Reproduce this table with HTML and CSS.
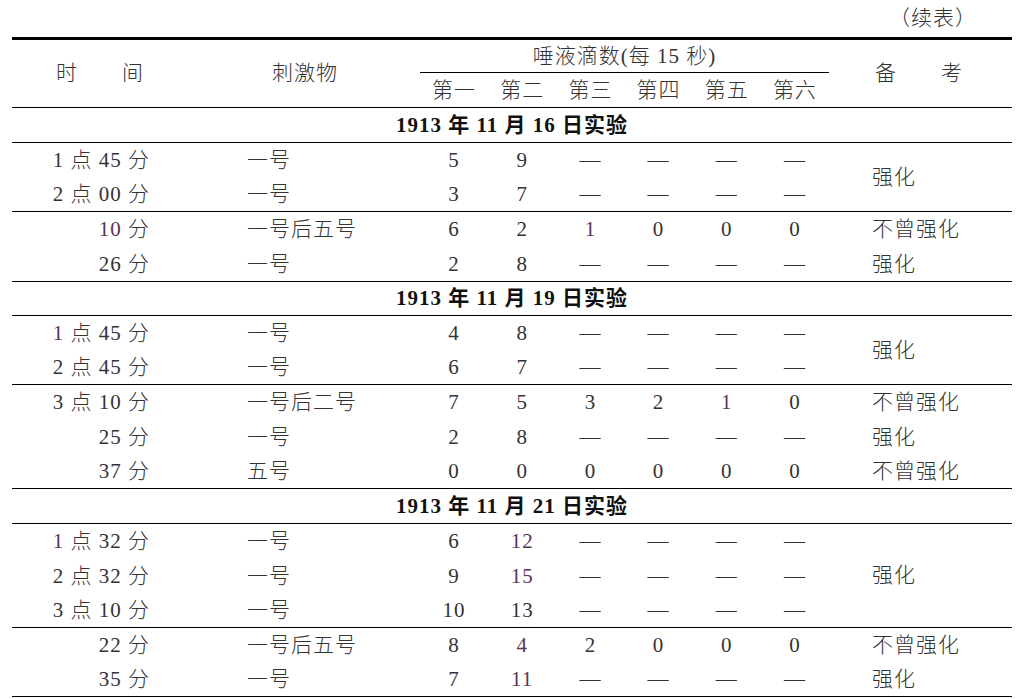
FILE: index.html
```html
<!DOCTYPE html>
<html lang="zh">
<head>
<meta charset="utf-8">
<title>续表</title>
<link rel="stylesheet" href="styles.css">
</head>
<body>
<div class="page">
  <div class="cont">（续表）</div>
  <table class="data">
    <colgroup>
      <col class="c-time"><col class="c-stim">
      <col class="c-n"><col class="c-n"><col class="c-n"><col class="c-n"><col class="c-n"><col class="c-n">
      <col class="c-note">
    </colgroup>
    <thead>
      <tr>
        <th rowspan="2" class="h-time">时　　间</th>
        <th rowspan="2" class="h-stim">刺激物</th>
        <th colspan="6" class="h-drops">唾液滴数(每 15 秒)</th>
        <th rowspan="2" class="h-note">备　　考</th>
      </tr>
      <tr class="h-sub">
        <th>第一</th><th>第二</th><th>第三</th><th>第四</th><th>第五</th><th>第六</th>
      </tr>
    </thead>
    <tbody>
      <tr class="sec"><td colspan="9">1913 年 11 月 16 日实验</td></tr>
      <tr><td class="t">1 点 45 分</td><td class="s">一号</td><td class="n">5</td><td class="n">9</td><td class="n">—</td><td class="n">—</td><td class="n">—</td><td class="n">—</td><td class="note b" rowspan="2">强化</td></tr>
      <tr class="end"><td class="t">2 点 00 分</td><td class="s">一号</td><td class="n">3</td><td class="n">7</td><td class="n">—</td><td class="n">—</td><td class="n">—</td><td class="n">—</td></tr>
      <tr class="x"><td class="t"><span class="p">10</span> 分</td><td class="s">一号后五号</td><td class="n">6</td><td class="n">2</td><td class="n p">1</td><td class="n">0</td><td class="n">0</td><td class="n">0</td><td class="note">不曾强化</td></tr>
      <tr class="end"><td class="t">26 分</td><td class="s">一号</td><td class="n">2</td><td class="n">8</td><td class="n">—</td><td class="n">—</td><td class="n">—</td><td class="n">—</td><td class="note">强化</td></tr>

      <tr class="sec sm"><td colspan="9">1913 年 11 月 19 日实验</td></tr>
      <tr><td class="t"><span class="p">1</span> 点 45 分</td><td class="s">一号</td><td class="n">4</td><td class="n">8</td><td class="n">—</td><td class="n">—</td><td class="n">—</td><td class="n">—</td><td class="note b" rowspan="2">强化</td></tr>
      <tr class="end"><td class="t">2 点 45 分</td><td class="s">一号</td><td class="n">6</td><td class="n">7</td><td class="n">—</td><td class="n">—</td><td class="n">—</td><td class="n">—</td></tr>
      <tr class="x"><td class="t">3 点 10 分</td><td class="s">一号后二号</td><td class="n">7</td><td class="n">5</td><td class="n">3</td><td class="n">2</td><td class="n p">1</td><td class="n">0</td><td class="note">不曾强化</td></tr>
      <tr><td class="t">25 分</td><td class="s">一号</td><td class="n">2</td><td class="n">8</td><td class="n">—</td><td class="n">—</td><td class="n">—</td><td class="n">—</td><td class="note">强化</td></tr>
      <tr class="end"><td class="t">37 分</td><td class="s">五号</td><td class="n">0</td><td class="n">0</td><td class="n">0</td><td class="n">0</td><td class="n">0</td><td class="n">0</td><td class="note">不曾强化</td></tr>

      <tr class="sec"><td colspan="9">1913 年 11 月 21 日实验</td></tr>
      <tr class="x"><td class="t"><span class="p">1</span> 点 32 分</td><td class="s">一号</td><td class="n">6</td><td class="n p">12</td><td class="n">—</td><td class="n">—</td><td class="n">—</td><td class="n">—</td><td class="note b" rowspan="3">强化</td></tr>
      <tr><td class="t">2 点 32 分</td><td class="s">一号</td><td class="n">9</td><td class="n p">15</td><td class="n">—</td><td class="n">—</td><td class="n">—</td><td class="n">—</td></tr>
      <tr class="end"><td class="t">3 点 10 分</td><td class="s">一号</td><td class="n">10</td><td class="n">13</td><td class="n">—</td><td class="n">—</td><td class="n">—</td><td class="n">—</td></tr>
      <tr><td class="t">22 分</td><td class="s">一号后五号</td><td class="n">8</td><td class="n p">4</td><td class="n">2</td><td class="n">0</td><td class="n">0</td><td class="n">0</td><td class="note">不曾强化</td></tr>
      <tr class="end"><td class="t">35 分</td><td class="s">一号</td><td class="n">7</td><td class="n p">11</td><td class="n">—</td><td class="n">—</td><td class="n">—</td><td class="n">—</td><td class="note">强化</td></tr>
    </tbody>
  </table>
</div>
</body>
</html>
```
FILE: styles.css
```css
html, body {
  margin: 0;
  padding: 0;
  background: #ffffff;
}

body {
  font-family: "Liberation Serif", "Noto Sans CJK SC", serif;
  font-size: 21px;
  font-weight: 300;
  color: #333333;
}

.page {
  width: 1000px;
  margin-left: 12px;
}

.cont {
  height: 37px;
  line-height: 37px;
  text-align: right;
  padding-right: 35px;
  letter-spacing: 1px;
}

.data {
  width: 1000px;
  table-layout: fixed;
  border-collapse: separate;
  border-spacing: 0;
  border-top: 3px solid #000;
}

.c-time { width: 148px; }
.c-stim { width: 260px; }
.c-n { width: 68.1667px; }
.c-note { width: 183px; }

.data th,
.data td {
  padding: 0;
  font-weight: 300;
  white-space: nowrap;
  letter-spacing: 1px;
  vertical-align: middle;
}

/* header */
.data thead th {
  line-height: 33px;
  border-bottom: 1px solid #000;
}

.data .h-time {
  text-align: left;
  padding-left: 44px;
}

.data .h-stim {
  text-align: left;
  padding-left: 112px;
}

.data .h-note {
  text-align: left;
  padding-left: 46px;
}

.data .h-drops {
  text-align: center;
  line-height: 32px;
}

.data .h-sub th {
  text-align: center;
  line-height: 34px;
}

/* body */
.data tbody td {
  line-height: 34px;
}

.data tr.x td {
  line-height: 35px;
}

.data tr.end td,
.data td.b,
.data tr.sec td {
  line-height: 34px;
  border-bottom: 1px solid #000;
}

.data tr.sec.sm td {
  line-height: 33px;
}

.data tr.sec td {
  text-align: center;
  font-weight: bold;
  color: #111;
}

.data td.t {
  text-align: right;
  padding-right: 10px;
}

.data td.s {
  text-align: left;
  padding-left: 87px;
}

.data td.n {
  text-align: center;
}

.data td.note {
  text-align: left;
  padding-left: 43px;
}

.p {
  color: #5a3358;
}
```
